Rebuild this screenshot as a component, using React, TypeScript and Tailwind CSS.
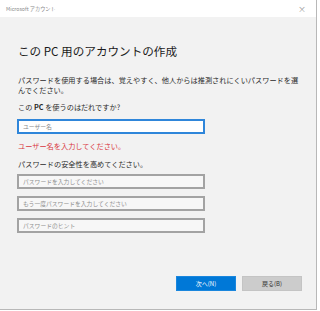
import React from "react";

const jp = { fontFamily: '"Noto Sans CJK JP", "Noto Sans", sans-serif' };

const Field: React.FC<{ placeholder: string; focused?: boolean }> = ({ placeholder, focused }) => (
  <input
    placeholder={placeholder}
    className={
      focused
        ? "block w-[188px] h-[15px] border-2 border-[#2f86da] bg-white px-[4px] text-[5.8px] outline-none placeholder:text-[#8a8a8a]"
        : "block w-[188px] h-[15px] border-2 border-[#a3a3a3] bg-[#f7f7f7] px-[4px] text-[5.8px] outline-none placeholder:text-[#8f8f8f]"
    }
  />
);

export default function App() {
  return (
    <div className="w-[320px] h-[311px] bg-white" style={jp}>
      <div className="w-[317px] h-[310px] flex flex-col bg-[#f2f2f2] border-r border-b border-[#b8b8b8]">
        {/* title bar */}
        <div className="h-[17px] shrink-0 bg-white flex items-center justify-between pl-[6px] pr-[10px]">
          <span className="text-[5.2px] text-[#8a8a8a]">Microsoft アカウント</span>
          <span className="text-[8px] leading-none text-[#9a9a9a]">×</span>
        </div>

        <div className="flex-1 flex flex-col pl-[18px]">
          <h1 className="mt-[26px] text-[11.6px] leading-[16px] font-normal text-[#1b1b1b]">
            この PC 用のアカウントの作成
          </h1>

          <p className="mt-[17px] w-[286px] text-[7.2px] leading-[9.5px] text-[#2a2a2a]">
            パスワードを使用する場合は、覚えやすく、他人からは推測されにくいパスワードを選んでください。
          </p>

          <p className="mt-[6.5px] text-[7.2px] leading-[10px] text-[#2a2a2a]">
            この <span className="font-bold">PC</span> を使うのはだれですか?
          </p>

          <div className="mt-[7px] -ml-[1px]">
            <Field placeholder="ユーザー名" focused />
          </div>

          <p className="mt-[7.5px] text-[7.2px] leading-[10px] text-[#d9363e]">
            ユーザー名を入力してください。
          </p>

          <p className="mt-[7.5px] text-[7.2px] leading-[10px] text-[#2a2a2a]">
            パスワードの安全性を高めてください。
          </p>

          <div className="mt-[5px] -ml-[1px] flex flex-col gap-[7px]">
            <Field placeholder="パスワードを入力してください" />
            <Field placeholder="もう一度パスワードを入力してください" />
            <Field placeholder="パスワードのヒント" />
          </div>

          <div className="mt-auto mb-[18px] mr-[14px] flex justify-end gap-[6px]">
            <button className="w-[60px] h-[15px] bg-[#0078d7] border border-[#1a86dd] text-white text-[6px] leading-none">
              次へ(N)
            </button>
            <button className="w-[60px] h-[15px] bg-[#cccccc] border border-[#c4c4c4] text-[#333] text-[6px] leading-none">
              戻る(B)
            </button>
          </div>
        </div>
      </div>
    </div>
  );
}
